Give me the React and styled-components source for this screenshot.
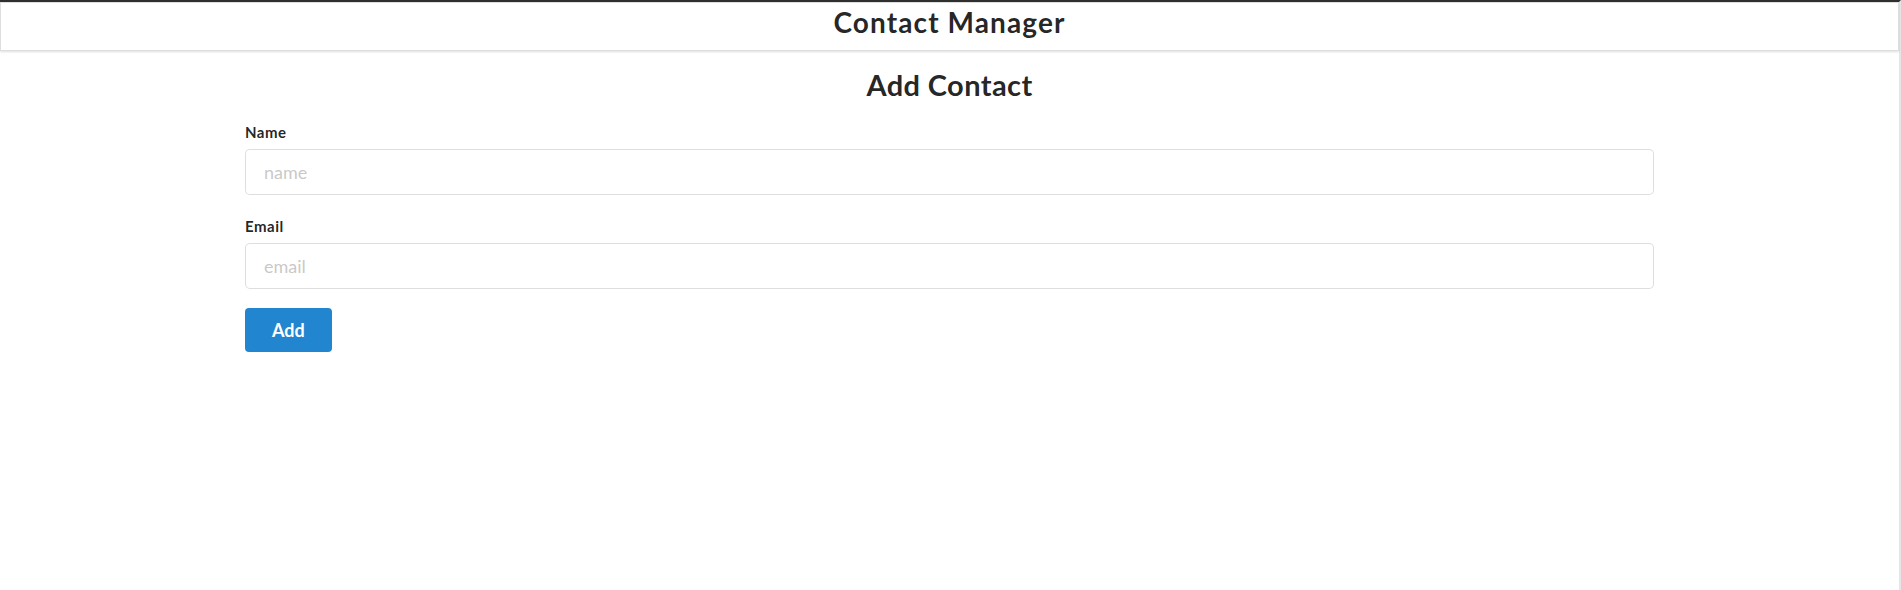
import React from "react";
import styled, { createGlobalStyle } from "styled-components";

const Global = createGlobalStyle`
  html, body { margin: 0; padding: 0; background: #fff; }
  body { font-family: Lato, "Helvetica Neue", Arial, sans-serif; color: rgba(0,0,0,.87); }
  * { box-sizing: border-box; }
`;

const Page = styled.div`
  min-height: 100vh;
  border-top: 2px solid #2f2f2f;
  border-right: 2px solid #e6e6e6;
  display: flex;
  flex-direction: column;
`;

const HeaderBar = styled.header`
  border: 1px solid rgba(34, 36, 38, 0.15);
  box-shadow: 0 1px 2px 0 rgba(34, 36, 38, 0.15);
  padding: 5px 0 13px;
  text-align: center;
`;

const AppTitle = styled.h1`
  margin: 0;
  font-family: Lato, sans-serif;
  font-weight: 700;
  font-size: 28px;
  line-height: 28.5px;
  letter-spacing: 1.1px;
  color: rgba(0, 0, 0, 0.87);
`;

const Main = styled.main`
  margin: 16px 245px 0;
`;

const Title = styled.h2`
  margin: 0 0 20px;
  text-align: center;
  font-family: Lato, sans-serif;
  font-weight: 700;
  font-size: 29px;
  line-height: 36px;
  letter-spacing: 0.4px;
  color: rgba(0, 0, 0, 0.87);
`;

const Form = styled.form`
  display: flex;
  flex-direction: column;
  align-items: flex-start;
`;

const Field = styled.div`
  width: 100%;
  display: flex;
  flex-direction: column;
  gap: 8px;
  margin-bottom: ${(p) => p.$gap}px;
`;

const Label = styled.label`
  font-family: Lato, sans-serif;
  font-weight: 700;
  font-size: 15px;
  line-height: 18px;
  letter-spacing: 0.5px;
  color: rgba(0, 0, 0, 0.87);
`;

const Input = styled.input`
  width: 100%;
  height: 46px;
  padding: 0 18px;
  font-family: Lato, sans-serif;
  font-size: 18px;
  color: rgba(0, 0, 0, 0.87);
  border: 1px solid rgba(34, 36, 38, 0.15);
  border-radius: 5px;
  outline: none;
  background: #fff;
  &::placeholder { color: rgba(191, 191, 191, 0.87); }
`;

const Button = styled.button`
  height: 44px;
  padding: 0 27px;
  border: none;
  border-radius: 4px;
  background: #2185d0;
  color: #fff;
  font-family: Lato, sans-serif;
  font-weight: 700;
  font-size: 18px;
  cursor: pointer;
`;

export default function App() {
  return (
    <>
      <Global />
      <Page>
        <HeaderBar>
          <AppTitle>Contact Manager</AppTitle>
        </HeaderBar>
        <Main>
          <Title>Add Contact</Title>
          <Form onSubmit={(e) => e.preventDefault()}>
            <Field $gap={22}>
              <Label>Name</Label>
              <Input type="text" name="name" placeholder="name" />
            </Field>
            <Field $gap={19}>
              <Label>Email</Label>
              <Input type="text" name="email" placeholder="email" />
            </Field>
            <Button type="submit">Add</Button>
          </Form>
        </Main>
      </Page>
    </>
  );
}
